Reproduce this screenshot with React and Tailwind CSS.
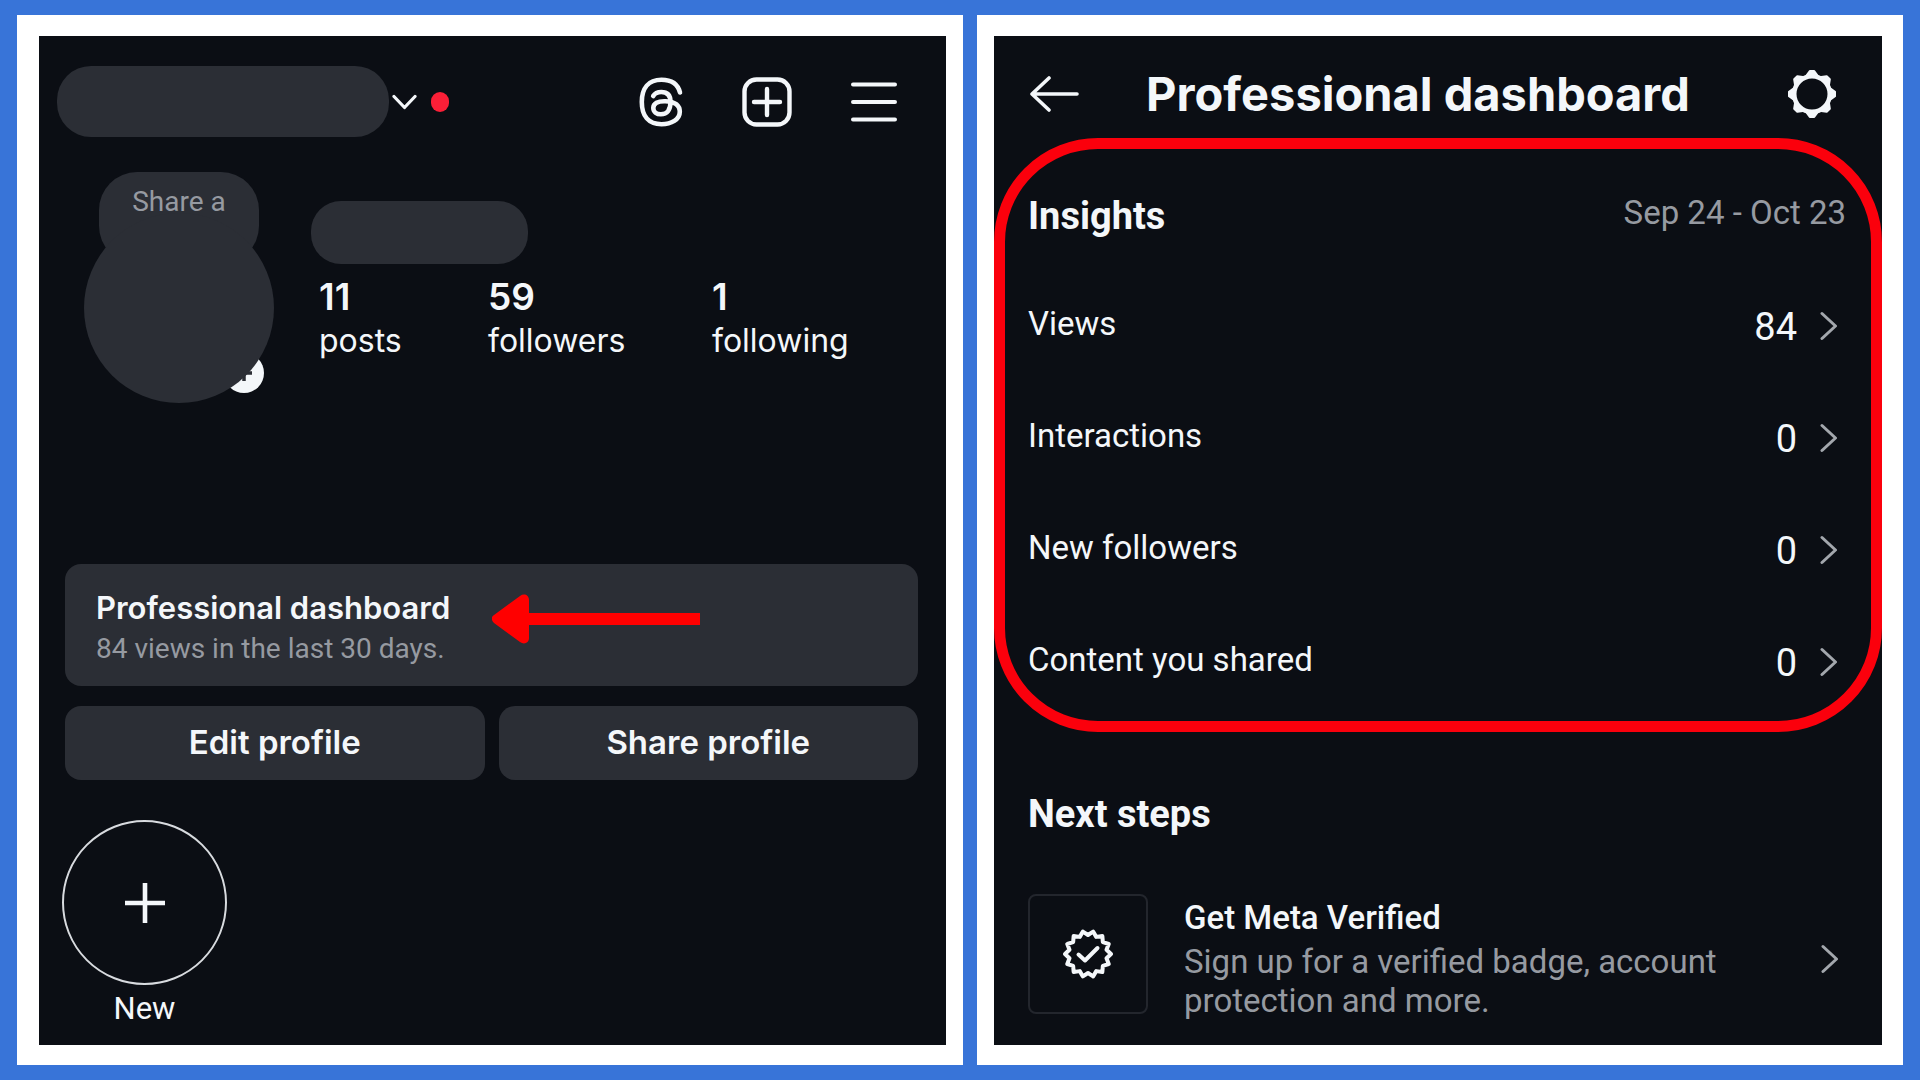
import React from "react";

function ChevronRight() {
  return (
    <svg aria-hidden="true" viewBox="0 0 18 30" className="h-[30px] w-[18px] shrink-0" fill="none" stroke="#a3a7ad" strokeWidth="3" strokeLinecap="round" strokeLinejoin="round">
      <path d="M2 2.500 15.500 15 2 27.500" />
    </svg>
  );
}

function ThreadsIcon() {
  return (
    <svg aria-hidden="true" viewBox="0 0 44 50" className="h-[50px] w-11" fill="none" stroke="#f4f7fa" strokeWidth="4.600" strokeLinecap="round" strokeLinejoin="round">
      <path d="M41 15.500C38.800 7 32.500 2.800 22.500 2.800 9.500 2.800 2.800 11 2.800 25s6.700 22.200 19.700 22.200c9.800 0 18.300-4.700 18.300-12.400 0-6.800-5.500-10.200-14.500-10.600-7.500-.3-12 2.300-12 6.900 0 3.800 3.300 6.200 7.600 6.200 6.300 0 9.600-4.500 9.600-12.300 0-6.500-3.300-10-9.200-10-3.700 0-6.500 1.300-8.100 4" />
    </svg>
  );
}

function CreateIcon() {
  return (
    <svg aria-hidden="true" viewBox="0 0 50 50" className="size-[50px]" fill="none" stroke="#f4f7fa" strokeWidth="4.400" strokeLinecap="round">
      <rect x="2.500" y="2.500" width="45" height="45" rx="12" />
      <path d="M25 12v26M12 25h26" />
    </svg>
  );
}

function MenuIcon() {
  return (
    <svg aria-hidden="true" viewBox="0 0 46 40" className="h-10 w-[46px]" fill="none" stroke="#f4f7fa" strokeWidth="4" strokeLinecap="round">
      <path d="M2 2.500h42M2 20h42M2 37.500h42" />
    </svg>
  );
}

function GearIcon() {
  const teeth = [0, 45, 90, 135, 180, 225, 270, 315];
  return (
    <svg aria-hidden="true" viewBox="0 0 50 50" className="size-[50px]" fill="none" stroke="#f4f7fa">
      <circle cx="25" cy="25" r="17.800" strokeWidth="4.600" />
      {teeth.map((a) => (
        <path key={a} d="M19.500 6.500 22.800 2h4.400L30.500 6.500Z" fill="#f4f7fa" strokeWidth="2" strokeLinejoin="round" transform={`rotate(${a} 25 25)`} />
      ))}
    </svg>
  );
}

function VerifiedIcon() {
  const points = 14;
  const d = Array.from({ length: points * 2 }, (_, i) => {
    const r = i % 2 ? 19 : 23;
    const a = (Math.PI * (i + 1)) / points - Math.PI / 2;
    return `${i ? "L" : "M"}${(25 + r * Math.cos(a)).toFixed(2)} ${(25 + r * Math.sin(a)).toFixed(2)}`;
  }).join("");
  return (
    <svg aria-hidden="true" viewBox="0 0 50 50" className="size-[50px]" fill="none" stroke="#f4f7fa" strokeWidth="4" strokeLinejoin="round" strokeLinecap="round">
      <path d={d + "Z"} />
      <path d="M15.500 25.500 22 31.500 34.500 19" />
    </svg>
  );
}

function Avatar() {
  return (
    <div className="relative flex w-[190px] flex-col items-center">
      <div className="flex h-[92px] w-40 justify-center rounded-[38px] bg-[#2b2e35] pt-3">
        <span className="text-[28px] leading-9 text-[#969aa1]">Share a</span>
      </div>
      <svg aria-hidden="true" viewBox="0 0 40 40" className="absolute right-2.5 bottom-2.5 size-10">
        <circle cx="20" cy="20" r="20" fill="#f4f7fa" />
        <path d="M20 11v17M11 20h17" stroke="#2b2e35" strokeWidth="3.500" />
      </svg>
      <div className="relative -mt-[51px] size-[190px] rounded-full bg-[#2b2e35]" />
    </div>
  );
}

function Stat({ value, label }) {
  return (
    <a href="#stat" className="block font-['Inter',sans-serif]">
      <span className="block text-[37px] leading-[46px] font-semibold">{value}</span>
      <span className="block text-[32px] leading-[42px]">{label}</span>
    </a>
  );
}

function ProfilePanel() {
  return (
    <section className="flex flex-col bg-[#0b0e14] pt-[30px] pr-7 pb-4 pl-[26px]">
      <header className="-ml-2 flex items-center">
        <div className="h-[71px] w-[332px] rounded-[34px] bg-[#2b2e35]" />
        <button aria-label="Switch account" className="ml-[3px] flex items-center gap-3.5">
          <svg aria-hidden="true" viewBox="0 0 25 16" className="h-4 w-[25px]" fill="none" stroke="#f4f7fa" strokeWidth="3.200" strokeLinecap="round" strokeLinejoin="round">
            <path d="M2 2.500 12.500 13.500 23 2.500" />
          </svg>
          <span className="h-5 w-[18px] rounded-full bg-[#fb1f37]" />
        </button>
        <div className="mr-[21px] ml-auto flex items-center gap-[59px]">
          <button aria-label="Threads"><ThreadsIcon /></button>
          <button aria-label="Create"><CreateIcon /></button>
          <button aria-label="Menu"><MenuIcon /></button>
        </div>
      </header>

      <div className="mt-[35px] flex gap-[37px] pl-[19px]">
        <Avatar />
        <div className="pt-[29px]">
          <div className="h-[63px] w-[217px] rounded-[30px] bg-[#2b2e35]" />
          <div className="mt-2.5 ml-2 flex">
            <div className="w-[169px]"><Stat value="11" label="posts" /></div>
            <div className="w-56"><Stat value="59" label="followers" /></div>
            <Stat value="1" label="following" />
          </div>
        </div>
      </div>

      <button className="mt-[161px] flex items-center gap-[42px] rounded-2xl bg-[#2b2e35] px-[31px] pt-[22px] pb-[18px] text-left">
        <span className="block">
          <span className="block font-['Inter',sans-serif] text-[31px] leading-[44px] font-semibold">Professional dashboard</span>
          <span className="block text-[28px] leading-[38px] text-[#969aa1]">84 views in the last 30 days.</span>
        </span>
        <svg aria-hidden="true" viewBox="0 0 208 50" className="mb-4 h-[50px] w-52" fill="#ff0000">
          <path d="M208 19v12H37v13c0 5-5 7-9 4L2 29c-3-3-3-6 0-8L28 2c4-3 9-1 9 4v13Z" />
        </svg>
      </button>
      <div className="mt-5 grid grid-cols-2 gap-3.5 font-['Inter',sans-serif]">
        <button className="h-[74px] rounded-2xl bg-[#2b2e35] text-[33px] font-semibold">Edit profile</button>
        <button className="h-[74px] rounded-2xl bg-[#2b2e35] text-[33px] font-semibold">Share profile</button>
      </div>

      <button className="mt-10 -ml-[3px] w-[165px] text-center">
        <span className="flex size-[165px] items-center justify-center rounded-full border-2 border-[#d8dbdf]">
          <svg aria-hidden="true" viewBox="0 0 42 42" className="size-[42px]" stroke="#f4f7fa" strokeWidth="4.600">
            <path d="M21 1v40M1 21h40" />
          </svg>
        </span>
        <span className="mt-1 block text-[31px] leading-10">New</span>
      </button>
    </section>
  );
}

const metrics = [
  ["Views", "84"],
  ["Interactions", "0"],
  ["New followers", "0"],
  ["Content you shared", "0"],
];

function DashboardPanel() {
  return (
    <section className="flex flex-col bg-[#0b0e14]">
      <header className="flex items-center justify-between pt-[25px] pr-[45px] pl-9">
        <button aria-label="Back">
          <svg aria-hidden="true" viewBox="0 0 50 36" className="h-9 w-[50px]" fill="none" stroke="#f4f7fa" strokeWidth="3.600" strokeLinecap="round" strokeLinejoin="round">
            <path d="M19 2 2 18l17 16M3 18h44" />
          </svg>
        </button>
        <h1 className="mr-[97px] ml-auto font-['Inter',sans-serif] text-[47px] leading-[66px] font-bold">Professional dashboard</h1>
        <button aria-label="Settings"><GearIcon /></button>
      </header>

      <section className="mt-[11px] rounded-[104px] border-[11px] border-[#fb000c] pt-10 pr-[25px] pb-[3px] pl-[23px]">
        <div className="flex items-start justify-between">
          <h2 className="text-[38px] leading-[54px] font-bold">Insights</h2>
          <span className="text-[33px] leading-[48px] text-[#969aa1]">Sep 24 - Oct 23</span>
        </div>
        <div className="mt-[27px]">
          {metrics.map(([label, value]) => (
            <button key={label} className="flex h-28 w-full items-center pr-2 text-left">
              <span className="pb-1 text-[33px]">{label}</span>
              <span className="mr-[23px] ml-auto pt-0.5 text-[38px]">{value}</span>
              <ChevronRight />
            </button>
          ))}
        </div>
      </section>

      <section className="px-[34px] pt-[57px] pb-[23px]">
        <h2 className="text-[38px] leading-[50px] font-bold">Next steps</h2>
        <button className="mt-[55px] flex w-full items-end pr-[9px] text-left">
          <span className="mb-1.5 flex size-[120px] shrink-0 items-center justify-center rounded-lg border-2 border-[#23262d]">
            <VerifiedIcon />
          </span>
          <span className="ml-9 block">
            <span className="block text-[33px] leading-[48px] font-medium">Get Meta Verified</span>
            <span className="block max-w-[560px] text-[33px] leading-[39px] text-[#969aa1]">Sign up for a verified badge, account protection and more.</span>
          </span>
          <span className="ml-auto self-center pt-1"><ChevronRight /></span>
        </button>
      </section>
    </section>
  );
}

export default function App() {
  return (
    <main className="grid min-h-screen grid-cols-[946fr_926fr] gap-3.5 bg-[#3874d8] px-[17px] py-[15px] font-['Roboto',sans-serif] text-[#f4f7fa]">
      <div className="grid bg-white pt-[21px] pr-[17px] pb-5 pl-[22px]">
        <ProfilePanel />
      </div>
      <div className="grid bg-white pt-[21px] pr-[21px] pb-5 pl-[17px]">
        <DashboardPanel />
      </div>
    </main>
  );
}
